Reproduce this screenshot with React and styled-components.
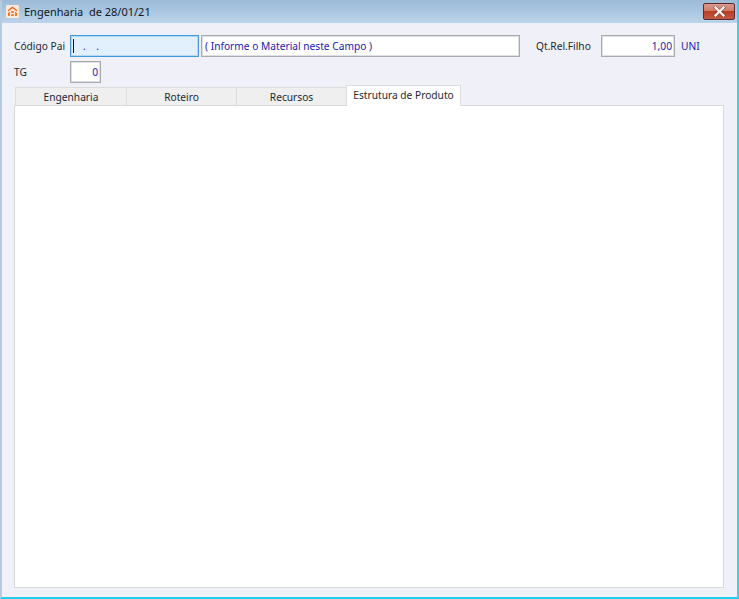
import React from "react";
import styled, { createGlobalStyle } from "styled-components";

const Global = createGlobalStyle`
  html, body { margin: 0; padding: 0; background: #f0f1f8; }
  body { font-family: "Noto Sans", "DejaVu Sans", sans-serif; font-size: 10.2px; color: #1c2733; }
`;

const Win = styled.div`
  width: 739px; height: 599px; box-sizing: border-box; overflow: hidden;
  display: flex; flex-direction: column;
  background: #f0f1f8;
  border-left: 2px solid #b4cbe2;
  border-right: 2px solid #3fd0ee;
  border-bottom: 2px solid #22cdea;
`;
const TitleBar = styled.div`
  height: 23px; flex: none; display: flex; align-items: center;
  margin-left: -2px; margin-right: -2px;
  padding: 0 4px 0 6px;
  background: linear-gradient(180deg, #9dbbd8 0%, #aac6e0 50%, #bcd4ea 100%);
`;
const AppIcon = styled.svg`width: 13px; height: 13px; flex: none; margin-top: -1px;`;
const Title = styled.div`
  margin-left: 5px; font-size: 11px; color: #10181f; white-space: pre; flex: 1;
`;
const CloseBtn = styled.div`
  width: 32px; height: 17px; margin-top: -1px; box-sizing: border-box;
  border: 1px solid #5a2a35; border-radius: 2px;
  background: linear-gradient(180deg, #dc9a8c 0%, #cf7a66 45%, #b83d22 50%, #c25a42 100%);
  display: flex; align-items: center; justify-content: center;
`;
const Content = styled.div`
  flex: 1; display: flex; flex-direction: column; padding: 12px 13px 9px 12px; min-height: 0;
`;
const Row = styled.div`
  display: flex; align-items: center; height: 22px; margin-bottom: ${p => p.$mb || 0}px;
`;
const Label = styled.div`
  width: ${p => p.$w}px; flex: none; white-space: nowrap; margin-left: ${p => p.$ml || 0}px; padding-bottom: 1px;
`;
const Field = styled.div`
  width: ${p => p.$w}px; height: 22px; flex: none; box-sizing: border-box;
  margin-left: ${p => p.$ml || 0}px;
  background: ${p => p.$focus ? "#e2f0fe" : "#ffffff"};
  border: 1px solid ${p => p.$focus ? "#3f9ae0" : "#a8aaae"};
  box-shadow: inset 0 0 0 1px ${p => p.$focus ? "#b6d8f4" : "#dfe0e3"};
  color: #1a1ab0; display: flex; align-items: center; padding: 0 2px 0 3px;
  justify-content: ${p => p.$right ? "flex-end" : "flex-start"};
  white-space: pre; font-size: 10.2px;
`;
const Caret = styled.span`
  display: inline-block; width: 1px; height: 14px; background: #111; margin: 0 9px 0 -1px;
`;
const Unit = styled.div`color: #1a1ab0; margin-left: 6px; padding-bottom: 1px;`;
const Tabs = styled.div`
  display: flex; align-items: flex-end; height: 22px; margin-left: 1px; position: relative; z-index: 1;
`;
const Tab = styled.div`
  box-sizing: border-box; width: ${p => p.$w}px; height: ${p => p.$active ? 21 : 18}px;
  display: flex; align-items: center; justify-content: center;
  color: #1c2733;
  background: ${p => p.$active ? "#ffffff" : "#efefef"};
  border: 1px solid #dddddd; border-bottom: none; border-left-width: ${p => p.$first || p.$active ? 1 : 0}px;
  margin-bottom: ${p => p.$active ? -1 : 0}px;
  margin-left: ${p => p.$active ? -1 : 0}px;
  padding-bottom: ${p => p.$active ? 3 : 0}px;
`;
const Panel = styled.div`
  flex: 1; background: #fff; border: 1px solid #d9d9d9;
`;

export default function App() {
  return (
    <Win>
      <Global />
      <TitleBar>
        <AppIcon viewBox="0 0 13 13">
          <rect width="13" height="13" rx="1" fill="#fbe9dd" />
          <path d="M2 5l4.5-3.5L11 5v1.6L6.5 3.2 2 6.6z" fill="#e8641c" />
          <path d="M2 8l2-1.5V11H2zM11 8L9 6.5V11h2zM5.2 6h2.6v2H5.2zM5.2 9h2.6v2H5.2z" fill="#ee7a30" />
        </AppIcon>
        <Title>Engenharia  de 28/01/21</Title>
        <CloseBtn>
          <svg width="15" height="11" viewBox="0 0 15 11">
            <path d="M3.5 1.5l8 8M11.5 1.5l-8 8" stroke="#5a2a2a" strokeWidth="3.6" strokeLinecap="square" fill="none" opacity="0.55" />
            <path d="M3.5 1.5l8 8M11.5 1.5l-8 8" stroke="#f4f0ee" strokeWidth="2.4" strokeLinecap="square" fill="none" />
          </svg>
        </CloseBtn>
      </TitleBar>
      <Content>
        <Row $mb={4}>
          <Label $w={56}>Código Pai</Label>
          <Field $w={129} $focus><Caret />.    .</Field>
          <Field $w={319} $ml={2}>( Informe o Material neste Campo )</Field>
          <Label $w={65} $ml={16}>Qt.Rel.Filho</Label>
          <Field $w={74} $right>1,00</Field>
          <Unit>UNI</Unit>
        </Row>
        <Row>
          <Label $w={56}>TG</Label>
          <Field $w={31} $right>0</Field>
        </Row>
        <Tabs>
          <Tab $w={112} $first>Engenharia</Tab>
          <Tab $w={110}>Roteiro</Tab>
          <Tab $w={110}>Recursos</Tab>
          <Tab $w={115} $active>Estrutura de Produto</Tab>
        </Tabs>
        <Panel />
      </Content>
    </Win>
  );
}
